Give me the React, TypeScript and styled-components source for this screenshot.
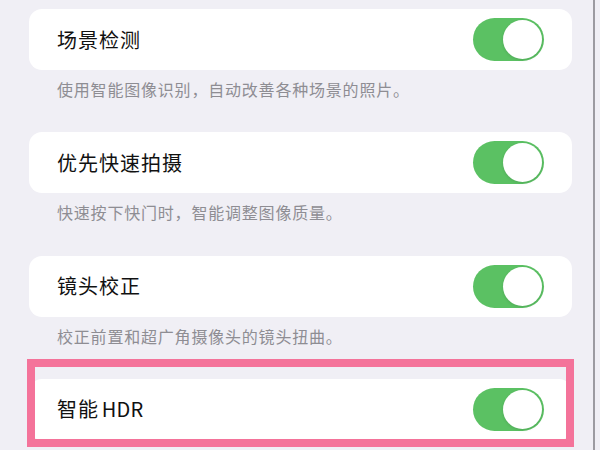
import React from 'react';
import styled, { createGlobalStyle } from 'styled-components';

const GlobalStyle = createGlobalStyle`
  html, body {
    margin: 0;
    padding: 0;
    background: #f0eff5;
  }
  body {
    font-family: "Noto Sans CJK SC", "Noto Sans", sans-serif;
    -webkit-font-smoothing: antialiased;
  }
`;

const Screen = styled.div`
  width: 600px;
  height: 450px;
  display: flex;
  overflow: hidden;
  background: #f0eff5;
`;

const Column = styled.div`
  flex: 0 0 593px;
  box-sizing: border-box;
  padding: 9px 21px 0 29px;
  display: flex;
  flex-direction: column;
`;

const Divider = styled.div`
  flex: 0 0 2px;
  background: #9c9ba1;
`;

const Section = styled.section`
  position: relative;
  height: 123.3px;
  flex-shrink: 0;
`;

const Card = styled.div`
  height: 61px;
  background: #ffffff;
  border-radius: 13px;
  display: flex;
  align-items: center;
  justify-content: space-between;
  padding: 0 28px 0 28px;
`;

const Title = styled.span`
  font-size: 20px;
  letter-spacing: 1px;
  color: #111111;
  line-height: 1;
`;

const Latin = styled.span`
  letter-spacing: 0.2px;
  margin-left: -2px;
`;

const Footer = styled.p`
  margin: 0;
  padding: 9px 0 0 28px;
  font-size: 16px;
  letter-spacing: 0.8px;
  line-height: 20px;
  color: #8e8d93;
`;

const Track = styled.button<{ $on: boolean }>`
  position: relative;
  width: 71px;
  height: 43px;
  border: none;
  padding: 0;
  border-radius: 22px;
  background: ${(p) => (p.$on ? '#5bc163' : '#e5e5ea')};
  cursor: pointer;
  flex-shrink: 0;
`;

const Knob = styled.span<{ $on: boolean }>`
  position: absolute;
  top: 2px;
  left: ${(p) => (p.$on ? '30px' : '2px')};
  width: 39px;
  height: 39px;
  border-radius: 50%;
  background: #ffffff;
  box-shadow: 0 1px 3px rgba(0, 0, 0, 0.12);
`;

const Highlight = styled.div`
  position: absolute;
  left: -2px;
  right: -2px;
  top: -20px;
  height: 88px;
  box-sizing: border-box;
  border: 8px solid #f4739a;
  pointer-events: none;
`;

interface Setting {
  title: string;
  suffix?: string;
  note?: string;
  highlighted?: boolean;
}

const settings: Setting[] = [
  { title: '场景检测', note: '使用智能图像识别，自动改善各种场景的照片。' },
  { title: '优先快速拍摄', note: '快速按下快门时，智能调整图像质量。' },
  { title: '镜头校正', note: '校正前置和超广角摄像头的镜头扭曲。' },
  { title: '智能', suffix: ' HDR', highlighted: true },
];

function Toggle({ on }: { on: boolean }) {
  return (
    <Track $on={on} aria-pressed={on}>
      <Knob $on={on} />
    </Track>
  );
}

export default function App() {
  return (
    <>
      <GlobalStyle />
      <Screen>
        <Column>
          {settings.map((s) => (
            <Section key={s.title}>
              <Card>
                <Title>
                  {s.title}
                  {s.suffix && <Latin>{s.suffix}</Latin>}
                </Title>
                <Toggle on />
              </Card>
              {s.note && <Footer>{s.note}</Footer>}
              {s.highlighted && <Highlight />}
            </Section>
          ))}
        </Column>
        <Divider />
      </Screen>
    </>
  );
}
